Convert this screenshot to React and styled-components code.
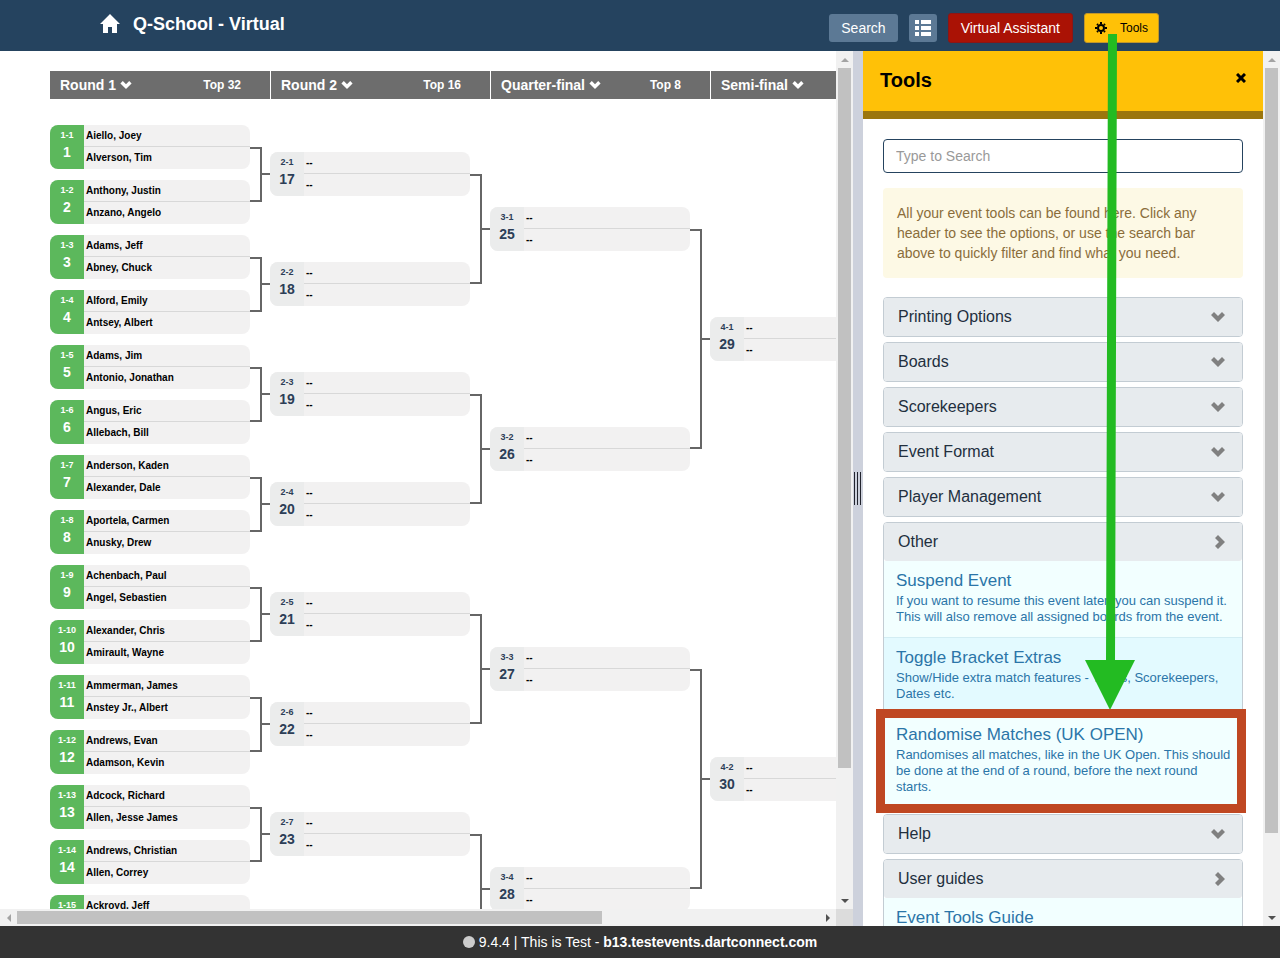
import React from 'react';
import styled, { createGlobalStyle } from 'styled-components';

const GlobalStyle = createGlobalStyle`
	* {
		box-sizing: border-box;
	}
	body {
		margin: 0;
		font-family: "Liberation Sans", Arial, sans-serif;
		font-size: 14px;
		line-height: 20px;
		background-color: #fff;
		color: #000;
	}
	button, input {
		font-family: inherit;
	}
`;

const Page = styled.div`
	position: relative;
	height: 100vh;
	display: flex;
	flex-direction: column;
	overflow: hidden;
`;
const NavBar = styled.header`
	flex: none;
	height: 51px;
	padding: 0 121px 4px 100px;
	background-color: #25435f;
	display: flex;
	align-items: center;
	justify-content: space-between;
`;
const Brand = styled.a`
	display: flex;
	align-items: center;
	gap: 13px;
	color: #fff;
	text-decoration: none;
`;
const BrandName = styled.h1`
	margin: 0;
	font-size: 18px;
	line-height: 20px;
`;
const NavActions = styled.nav`
	display: flex;
	align-items: center;
	gap: 11px;
	padding-top: 9px;
`;
const NavButton = styled.button`
	height: ${({ $bordered }) => ($bordered ? 30 : 28)}px;
	padding: 0 ${({ $square }) => ($square ? 6 : 12)}px;
	display: flex;
	align-items: center;
	border: ${({ $bordered }) => ($bordered ? `1px solid ${$bordered}` : 'none')};
	border-radius: 3px;
	background-color: ${({ $bg }) => $bg};
	color: ${({ $color }) => $color || '#fff'};
	font-size: 14px;
`;
const ToolsButton = styled(NavButton)`
	padding: 0 10px;
	gap: 13px;
	font-size: 12px;
`;
const Main = styled.main`
	flex: 1;
	min-height: 0;
	display: flex;
`;

const BracketPane = styled.section`
	flex: 1;
	min-width: 0;
	display: flex;
	flex-direction: column;
`;
const BracketRow = styled.div`
	flex: 1;
	min-height: 0;
	display: flex;
`;
const BracketView = styled.div`
	flex: 1;
	min-width: 0;
	overflow: hidden;
	padding: 20px 0 0 50px;
`;
const RoundBar = styled.div`
	display: flex;
	width: max-content;
	margin-bottom: 26px;
`;
const RoundHeader = styled.div`
	width: 220px;
	height: 28px;
	padding: 0 29px 0 10px;
	display: flex;
	align-items: center;
	justify-content: space-between;
	background-color: #6d6d6d;
	color: #fff;
	font-size: 12px;
	font-weight: bold;
	& + & {
		border-left: 1px solid #fff;
	}
`;
const RoundButton = styled.button`
	display: flex;
	align-items: center;
	gap: 4px;
	padding: 0;
	border: none;
	background: none;
	color: #fff;
	font-size: 14px;
	font-weight: bold;
`;
const Rounds = styled.div`
	display: flex;
	align-items: flex-start;
	width: max-content;
`;
const Pair = styled.div`
	display: flex;
	height: ${({ $pitch }) => $pitch * 2}px;
	padding-top: ${({ $top }) => $top}px;
`;
const PairMatches = styled.div`
	width: 200px;
	display: flex;
	flex-direction: column;
	gap: ${({ $pitch }) => $pitch - 44}px;
`;
const Elbow = styled.div`
	width: 12px;
	height: ${({ $pitch }) => $pitch}px;
	margin-top: 22px;
	border: 2px solid #666;
	border-left: none;
`;
const Stub = styled.div`
	width: 8px;
	height: 2px;
	margin-top: ${({ $pitch }) => Math.floor($pitch / 2) + 21}px;
	background-color: #666;
`;
const MatchBox = styled.div`
	flex: none;
	height: 44px;
	display: flex;
	border-radius: 8px;
	overflow: hidden;
	background-color: #f2f1f1;
`;
const MatchBadge = styled.div`
	width: 34px;
	padding-top: 4px;
	display: flex;
	flex-direction: column;
	align-items: center;
	background-color: ${({ $active }) => ($active ? '#5cb85c' : '#ebecec')};
	color: ${({ $active }) => ($active ? '#fff' : '#2c3e57')};
	font-weight: bold;
`;
const MatchCode = styled.span`
	font-size: 9px;
	line-height: 12px;
`;
const MatchNumber = styled.span`
	font-size: 14px;
	line-height: 22px;
`;
const Players = styled.div`
	flex: 1;
	min-width: 0;
`;
const Player = styled.div`
	height: 22px;
	padding-left: 2px;
	font-size: 10px;
	line-height: 21px;
	font-weight: bold;
	white-space: nowrap;
	& + & {
		line-height: 22px;
	}
	&:first-child {
		border-bottom: 1px solid #d8d8d8;
	}
`;

const Bar = styled.div`
	flex: none;
	display: flex;
	flex-direction: ${({ $horizontal }) => ($horizontal ? 'row' : 'column')};
	${({ $horizontal }) => ($horizontal ? 'flex: 1; height' : 'width')}: 17px;
	background-color: #f1f1f1;
`;
const BarArrow = styled.div`
	flex: none;
	width: 17px;
	height: 17px;
	display: flex;
	align-items: center;
	justify-content: center;
`;
const BarTrack = styled.div`
	flex: 1;
	padding: ${({ $horizontal }) => ($horizontal ? '2px 0' : '0 2px')};
`;
const BarThumb = styled.div`
	width: ${({ $horizontal, $size }) => ($horizontal ? $size : '100%')};
	height: ${({ $horizontal, $size }) => ($horizontal ? '100%' : $size)};
	background-color: #c1c1c1;
`;
const BottomBar = styled.div`
	flex: none;
	display: flex;
`;
const Corner = styled.div`
	width: 17px;
	height: 17px;
	background-color: #dcdcdc;
`;
const Splitter = styled.div`
	flex: none;
	width: 10px;
	display: flex;
	align-items: center;
	justify-content: center;
	gap: 2px;
	padding-right: 1px;
	background-color: #cdd1dc;
`;
const Grip = styled.span`
	width: 1px;
	height: 33px;
	background-color: #22242e;
`;

const ToolsPane = styled.aside`
	flex: none;
	width: 400px;
	overflow: hidden;
`;
const ToolsHeader = styled.div`
	height: 68px;
	padding: 0 17px;
	display: flex;
	align-items: center;
	justify-content: space-between;
	background-color: #ffc107;
	border-bottom: 8px solid #9b760d;
`;
const ToolsTitle = styled.h2`
	margin: 0;
	padding-bottom: 2px;
	font-size: 20px;
	line-height: 24px;
`;
const CloseButton = styled.button`
	padding: 0 0 6px;
	border: none;
	background: none;
	display: flex;
`;
const ToolsBody = styled.div`
	padding: 20px;
`;
const SearchInput = styled.input`
	display: block;
	width: 100%;
	height: 34px;
	padding: 0 12px;
	border: 1px solid #25435f;
	border-radius: 4px;
	font-size: 14px;
	&::placeholder {
		color: #999;
	}
`;
const Notice = styled.p`
	margin: 15px 0 19px;
	padding: 15px 14px;
	border-radius: 4px;
	background-color: #fdf9e5;
	color: #8a6d3b;
`;
const Panels = styled.div`
	display: flex;
	flex-direction: column;
	gap: 5px;
`;
const Panel = styled.section`
	border: 1px solid #c3ccd3;
	border-radius: 4px;
`;
const PanelHeader = styled.button`
	width: 100%;
	height: 38px;
	padding: 0 17px 0 14px;
	display: flex;
	align-items: center;
	justify-content: space-between;
	border: none;
	border-radius: 3px;
	background-color: #e7ebee;
	color: #222f3e;
	font-size: 16px;
`;
const PanelItem = styled.a`
	position: relative;
	display: block;
	padding: 10px 10px 12px 12px;
	border-bottom: 1px solid #d3edf3;
	background-color: #f2ffff;
	color: #2b75a8;
	text-decoration: none;
	&:nth-of-type(even) {
		background-color: #e3faff;
	}
	&:last-child {
		border-bottom-color: #f2ffff;
	}
`;
const ItemTitle = styled.div`
	margin-bottom: 2px;
	font-size: 17px;
	line-height: 20px;
`;
const ItemText = styled.div`
	font-size: 13px;
	line-height: 16px;
`;
const Highlight = styled.div`
	position: absolute;
	z-index: 1;
	top: -6px;
	right: -4px;
	bottom: -6px;
	left: -8px;
	border: 9px solid #bf4722;
`;
const Arrow = styled.svg`
	position: absolute;
	top: 34px;
	right: 145px;
	pointer-events: none;
`;
const Footer = styled.footer`
	flex: none;
	height: 32px;
	display: flex;
	align-items: center;
	justify-content: center;
	gap: 4px;
	background-color: #333;
	color: #fff;
`;
const StatusDot = styled.span`
	width: 12px;
	height: 12px;
	border-radius: 50%;
	background-color: #ccc;
`;

const firstRound = [
	['Aiello, Joey', 'Alverson, Tim'],
	['Anthony, Justin', 'Anzano, Angelo'],
	['Adams, Jeff', 'Abney, Chuck'],
	['Alford, Emily', 'Antsey, Albert'],
	['Adams, Jim', 'Antonio, Jonathan'],
	['Angus, Eric', 'Allebach, Bill'],
	['Anderson, Kaden', 'Alexander, Dale'],
	['Aportela, Carmen', 'Anusky, Drew'],
	['Achenbach, Paul', 'Angel, Sebastien'],
	['Alexander, Chris', 'Amirault, Wayne'],
	['Ammerman, James', 'Anstey Jr., Albert'],
	['Andrews, Evan', 'Adamson, Kevin'],
	['Adcock, Richard', 'Allen, Jesse James'],
	['Andrews, Christian', 'Allen, Correy'],
	['Ackroyd, Jeff', '']
];

const empty = count => Array.from({ length: count }, () => ['--', '--']);

const rounds = [
	{ name: 'Round 1', top: 'Top 32', pitch: 55, offset: 0, start: 1, matches: firstRound },
	{ name: 'Round 2', top: 'Top 16', pitch: 110, offset: 27, start: 17, matches: empty(7) },
	{ name: 'Quarter-final', top: 'Top 8', pitch: 220, offset: 82, start: 25, matches: empty(4) },
	{ name: 'Semi-final', top: '', pitch: 440, offset: 192, start: 29, matches: empty(2) }
];

const panels = [
	{ title: 'Printing Options' },
	{ title: 'Boards' },
	{ title: 'Scorekeepers' },
	{ title: 'Event Format' },
	{ title: 'Player Management' },
	{
		title: 'Other',
		items: [
			{
				title: 'Suspend Event',
				text: 'If you want to resume this event later, you can suspend it. This will also remove all assigned boards from the event.'
			},
			{
				title: 'Toggle Bracket Extras',
				text: 'Show/Hide extra match features - Times, Scorekeepers, Dates etc.'
			},
			{
				title: 'Randomise Matches (UK OPEN)',
				text: 'Randomises all matches, like in the UK Open. This should be done at the end of a round, before the next round starts.',
				highlighted: true
			}
		]
	},
	{ title: 'Help' },
	{ title: 'User guides', items: [{ title: 'Event Tools Guide' }] }
];

const ChevronDown = ({ width = 14, height = 10, color = '#808080' }) => (
	<svg width={width} height={height} viewBox="0 0 14 10">
		<path fill={color} d="M0 3L3 0l4 4 4-4 3 3-7 7z" />
	</svg>
);

const ChevronRight = () => (
	<svg width="11" height="14" viewBox="0 0 11 14">
		<path fill="#808080" d="M4 0l7 7-7 7-3-3 4-4-4-4z" />
	</svg>
);

const arrows = {
	up: 'M0 6l4-4 4 4z',
	down: 'M0 2h8L4 6z',
	left: 'M6 0v8L2 4z',
	right: 'M2 0l4 4-4 4z'
};

const ArrowIcon = ({ direction, color }) => (
	<BarArrow>
		<svg width="8" height="8" viewBox="0 0 8 8">
			<path fill={color} d={arrows[direction]} />
		</svg>
	</BarArrow>
);

const ScrollBar = ({ horizontal, size }) => (
	<Bar $horizontal={horizontal} aria-hidden="true">
		<ArrowIcon direction={horizontal ? 'left' : 'up'} color="#a3a3a3" />
		<BarTrack $horizontal={horizontal}>
			<BarThumb $horizontal={horizontal} $size={size} />
		</BarTrack>
		<ArrowIcon direction={horizontal ? 'right' : 'down'} color="#505050" />
	</Bar>
);

const Match = ({ round, index, number, players }) => (
	<MatchBox>
		<MatchBadge $active={round === 1}>
			<MatchCode>{round}-{index}</MatchCode>
			<MatchNumber>{number}</MatchNumber>
		</MatchBadge>
		<Players>
			<Player>{players[0]}</Player>
			<Player>{players[1]}</Player>
		</Players>
	</MatchBox>
);

const Round = ({ round, data }) => {
	const pairs = [];
	for (let i = 0; i < data.matches.length; i += 2) {
		pairs.push(data.matches.slice(i, i + 2));
	}
	return (
		<div>
			{pairs.map((pair, p) => (
				<Pair key={p} $pitch={data.pitch} $top={data.offset}>
					<PairMatches $pitch={data.pitch}>
						{pair.map((players, m) => (
							<Match
								key={m}
								round={round}
								index={p * 2 + m + 1}
								number={data.start + p * 2 + m}
								players={players}
							/>
						))}
					</PairMatches>
					<Elbow $pitch={data.pitch} />
					<Stub $pitch={data.pitch} />
				</Pair>
			))}
		</div>
	);
};

class App extends React.Component {

	render() {
		return (
			<Page>
				<GlobalStyle />
				<NavBar>
					<Brand href="#home">
						<svg width="20" height="19" viewBox="0 0 20 19">
							<path fill="#fff" d="M10 0l10 10h-3v9h-5v-6H8v6H3v-9H0z" />
						</svg>
						<BrandName>Q-School - Virtual</BrandName>
					</Brand>
					<NavActions>
						<NavButton $bg="#5c7995">Search</NavButton>
						<NavButton $bg="#5c7995" $square aria-label="List">
							<svg width="16" height="16" viewBox="0 0 16 16">
								<path fill="#fff" d="M0 0h4v4H0zM6 0h10v4H6zM0 6h4v4H0zM6 6h10v4H6zM0 12h4v4H0zM6 12h10v4H6z" />
							</svg>
						</NavButton>
						<NavButton $bg="#aa1205" $bordered="#8c1515">Virtual Assistant</NavButton>
						<ToolsButton $bg="#ffc107" $bordered="#c1962a" $color="#000">
							<svg width="12" height="12" viewBox="0 0 12 12">
								<circle cx="6" cy="6" r="3" fill="none" stroke="#000" strokeWidth="2" />
								<path stroke="#000" strokeWidth="2" d="M6 0v2M6 10v2M0 6h2M10 6h2M2 2l1 1M9 9l1 1M2 10l1-1M9 3l1-1" />
							</svg>
							Tools
						</ToolsButton>
					</NavActions>
				</NavBar>

				<Main>
					<BracketPane>
						<BracketRow>
							<BracketView>
								<RoundBar>
									{rounds.map(({ name, top }) => (
										<RoundHeader key={name}>
											<RoundButton>
												{name}
												<ChevronDown width={12} height={8} color="#fff" />
											</RoundButton>
											{top}
										</RoundHeader>
									))}
								</RoundBar>
								<Rounds>
									{rounds.map((data, i) => (
										<Round key={data.name} round={i + 1} data={data} />
									))}
								</Rounds>
							</BracketView>
							<ScrollBar size="85%" />
						</BracketRow>
						<BottomBar>
							<ScrollBar horizontal size="73%" />
							<Corner />
						</BottomBar>
					</BracketPane>
					<Splitter>
						<Grip />
						<Grip />
						<Grip />
					</Splitter>
					<ToolsPane>
						<ToolsHeader>
							<ToolsTitle>Tools</ToolsTitle>
							<CloseButton aria-label="Close">
								<svg width="10" height="10" viewBox="0 0 10 10">
									<path stroke="#000" strokeWidth="3" d="M1 1l8 8M9 1L1 9" />
								</svg>
							</CloseButton>
						</ToolsHeader>
						<ToolsBody>
							<SearchInput type="text" placeholder="Type to Search" aria-label="Type to Search" />
							<Notice>
								All your event tools can be found here. Click any header to see the
								options, or use the search bar above to quickly filter and find what you need.
							</Notice>
							<Panels>
								{panels.map(({ title, items }) => (
									<Panel key={title}>
										<PanelHeader aria-expanded={Boolean(items)}>
											{title}
											{items ? <ChevronRight /> : <ChevronDown />}
										</PanelHeader>
										{items && items.map(item => (
											<PanelItem key={item.title} href="#tool">
												<ItemTitle>{item.title}</ItemTitle>
												<ItemText>{item.text}</ItemText>
												{item.highlighted && <Highlight />}
											</PanelItem>
										))}
									</Panel>
								))}
							</Panels>
						</ToolsBody>
					</ToolsPane>
					<ScrollBar size="91%" />
				</Main>

				<Footer>
					<StatusDot />
					<span>9.4.4 | This is Test - <b>b13.testevents.dartconnect.com</b></span>
				</Footer>

				<Arrow width="50" height="676" viewBox="0 0 50 676" aria-hidden="true">
					<path fill="#23bb22" d="M23 0h9l-2 626h20L25 676 0 626h21z" />
				</Arrow>
			</Page>
		);
	}
}

export default App;
